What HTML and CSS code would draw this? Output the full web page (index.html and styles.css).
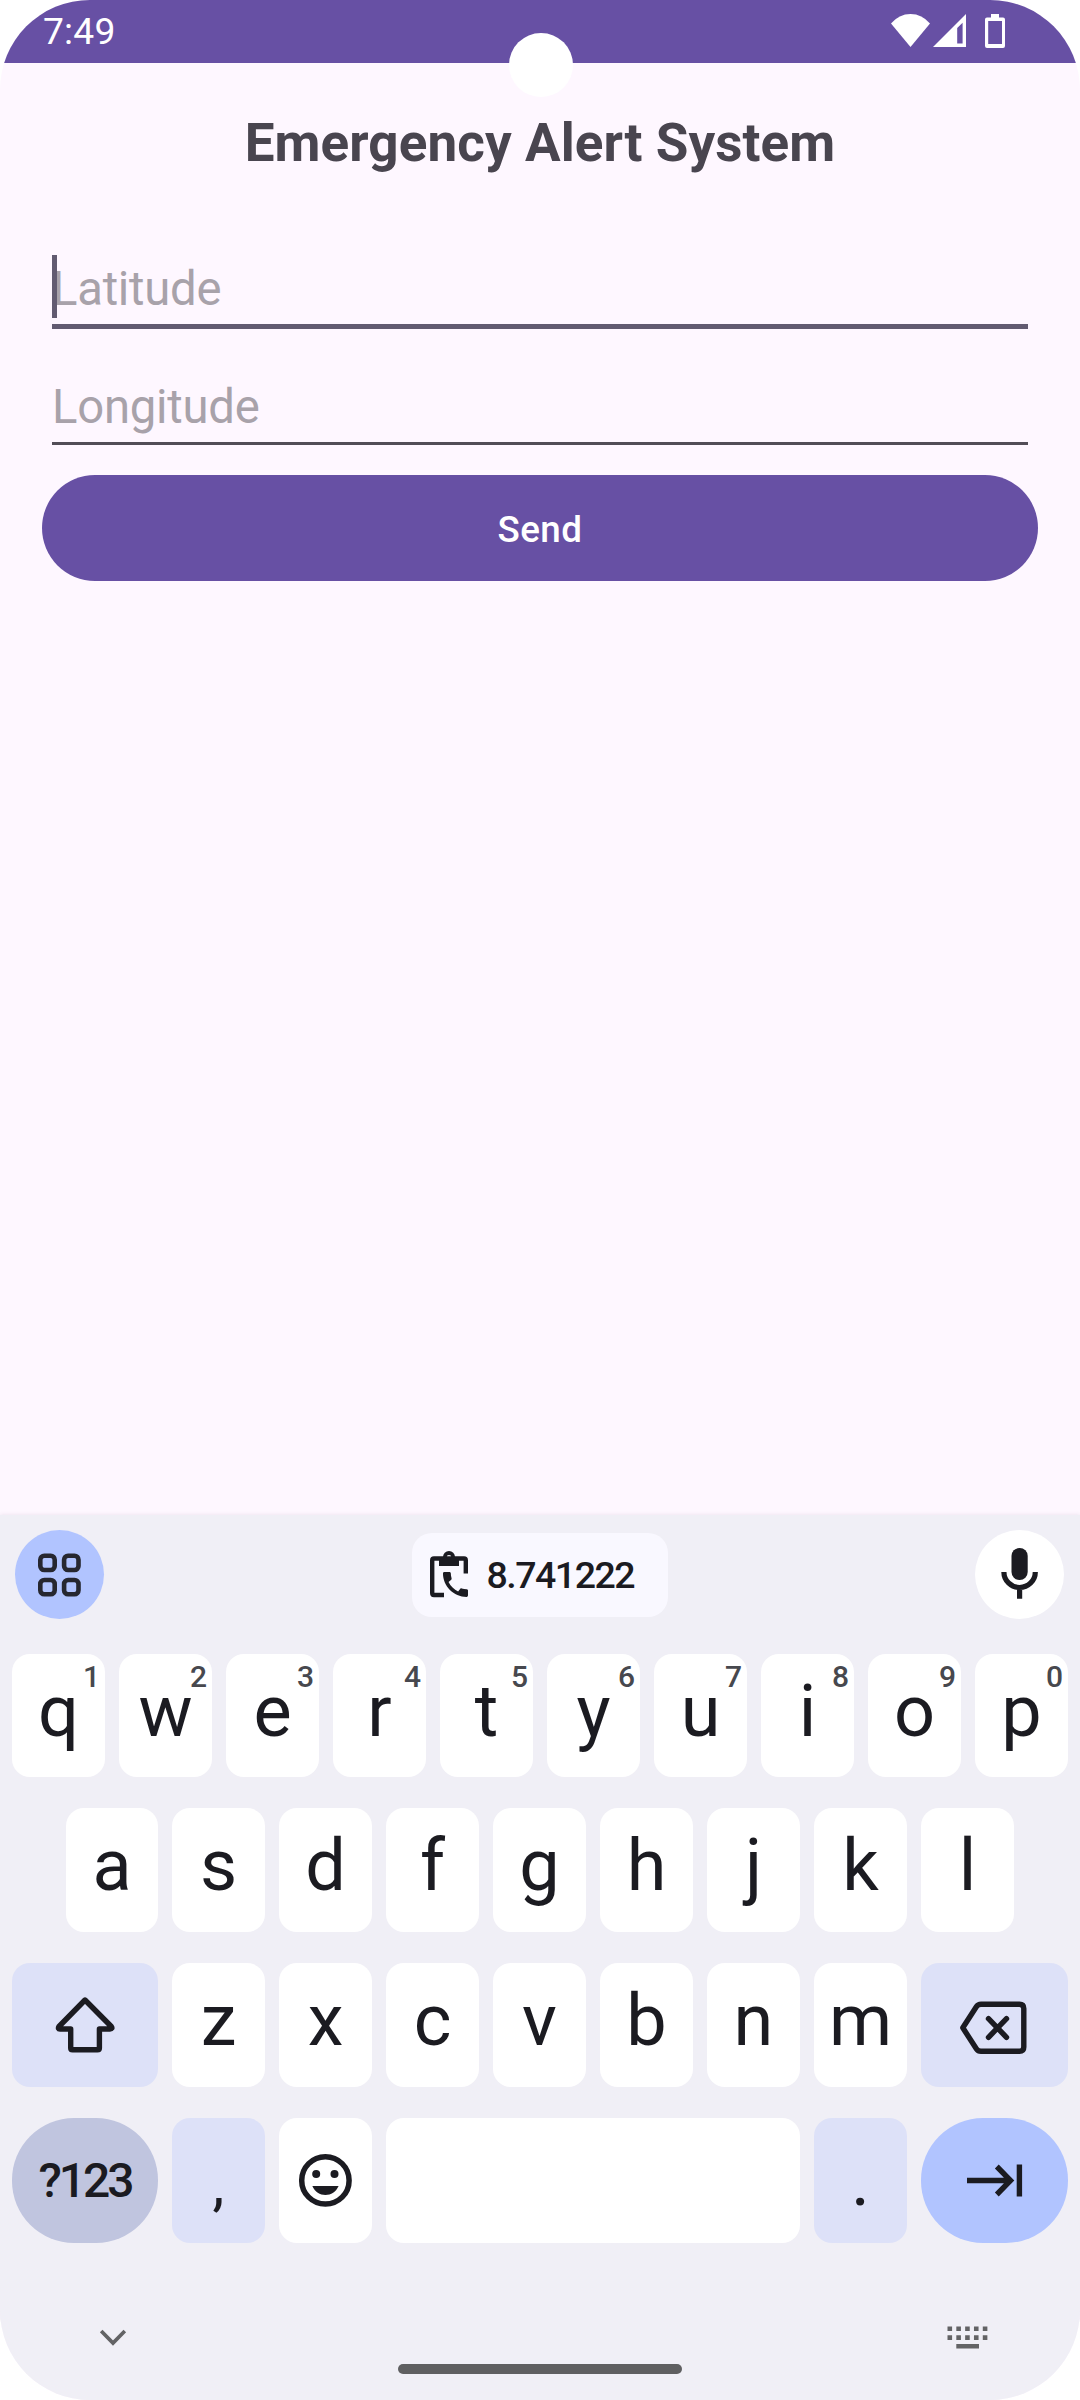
FILE: index.html
```html
<!DOCTYPE html>
<html lang="en">
<head>
<meta charset="utf-8">
<title>Emergency Alert System</title>
<link rel="stylesheet" href="styles.css">
</head>
<body>
<div class="phone">
  <div class="camera"></div>
  <header class="status">
    <span class="time">7:49</span>
    <svg class="status-icons" width="120" height="63" viewBox="888 0 120 63">
      <path fill="#fff" d="M891 23.500Q899 14 910.500 14T930 23.500L910.500 47Z"/>
      <path fill="#fff" fill-rule="evenodd" d="M933 47L966 14V47ZM957.200 28V43.500H962.600V22.700Z"/>
      <path fill="#fff" fill-rule="evenodd" d="M991 14H999V17.500H1003Q1005 17.500 1005 19.500V46Q1005 48 1003 48H987Q985 48 985 46V19.500Q985 17.500 987 17.500H991ZM988.200 21V44H1002V21Z"/>
    </svg>
  </header>

  <main class="app">
    <h1 class="title">Emergency Alert System</h1>
    <div class="field focused"><span class="caret"></span>Latitude</div>
    <div class="field">Longitude</div>
    <button class="send">Send</button>
  </main>

  <section class="keyboard">
    <div class="toolbar">
      <div class="round menu">
        <svg width="44" height="44" viewBox="0.500 0 44 44" fill="none" stroke="#262730" stroke-width="4.600">
          <rect x="2.800" y="2.800" width="14.400" height="14.200" rx="4"/>
          <rect x="26.600" y="2.800" width="14.400" height="14.200" rx="4"/>
          <rect x="2.800" y="27" width="14.400" height="14.200" rx="4"/>
          <rect x="26.600" y="27" width="14.400" height="14.200" rx="4"/>
        </svg>
      </div>
      <div class="chip">
        <svg width="40" height="48" viewBox="429 1551 40 48">
          <path fill="none" stroke="#1b1b21" stroke-width="4.400" stroke-linejoin="round" d="M444 1595H434Q432.200 1595 432.200 1593V1560.500Q432.200 1558.500 434 1558.500H464Q465.800 1558.500 465.800 1560.500V1573.500"/>
          <path fill="#1b1b21" fill-rule="evenodd" d="M439 1557H443A6 6 0 0 1 455 1557H459V1566H439ZM446.600 1557.500A2.400 2.400 0 1 0 451.400 1557.500A2.400 2.400 0 1 0 446.600 1557.500Z"/>
          <path fill="#1b1b21" transform="translate(438.800 1567.800) scale(1.390)" d="M20.010 15.380c-1.230 0-2.420-.2-3.530-.56-.35-.12-.74-.03-1.010.24l-1.570 1.970c-2.830-1.350-5.480-3.900-6.890-6.830l1.950-1.660c.27-.28.35-.67.24-1.020-.37-1.110-.56-2.300-.56-3.530 0-.54-.45-.99-.99-.99H4.190C3.650 3 3 3.240 3 3.990 3 13.280 10.730 21 20.010 21c.71 0 .99-.63.99-1.180v-3.450c0-.54-.45-.99-.99-.99z"/>
        </svg>
        <span>8.741222</span>
      </div>
      <div class="round mic">
        <svg width="89" height="89" viewBox="975 1530 89 89">
          <rect x="1011.500" y="1548" width="16.200" height="32" rx="8" fill="#1b1b21"/>
          <path fill="none" stroke="#1b1b21" stroke-width="5.200" d="M1003.900 1572A15.700 15.500 0 0 0 1035.300 1572M1019.600 1587V1598.700"/>
        </svg>
      </div>
    </div>

    <div class="row row1">
      <div class="key">q<sup>1</sup></div><div class="key">w<sup>2</sup></div><div class="key">e<sup>3</sup></div><div class="key">r<sup>4</sup></div><div class="key">t<sup>5</sup></div><div class="key">y<sup>6</sup></div><div class="key">u<sup>7</sup></div><div class="key">i<sup>8</sup></div><div class="key">o<sup>9</sup></div><div class="key">p<sup>0</sup></div>
    </div>
    <div class="row row2">
      <div class="key">a</div><div class="key">s</div><div class="key">d</div><div class="key">f</div><div class="key">g</div><div class="key">h</div><div class="key">j</div><div class="key">k</div><div class="key">l</div>
    </div>
    <div class="row row3">
      <div class="key wide tint">
        <svg width="146" height="124" viewBox="12 1963 146 124"><path fill="none" stroke="#1b1b21" stroke-width="5.400" stroke-linejoin="round" d="M85 2000L59 2026.500Q57.500 2029 60 2029H70.700V2048Q70.700 2049.800 72.500 2049.800H97.500Q99.400 2049.800 99.400 2048V2029H110Q113 2029 111.300 2026.500Z"/></svg>
      </div>
      <div class="key">z</div><div class="key">x</div><div class="key">c</div><div class="key">v</div><div class="key">b</div><div class="key">n</div><div class="key">m</div>
      <div class="key wide tint">
        <svg width="147" height="124" viewBox="921 1963 147 124"><path fill="none" stroke="#1b1b21" stroke-width="5.400" stroke-linejoin="round" stroke-linecap="round" d="M962.800 2027.800L976.500 2006.500Q978 2004.200 981 2004.200H1019.500Q1023.800 2004.200 1023.800 2008.500V2047Q1023.800 2051.300 1019.500 2051.300H981Q978 2051.300 976.500 2049ZM988.500 2018.700L1006.500 2037.300M1006.500 2018.700L988.500 2037.300"/></svg>
      </div>
    </div>
    <div class="row row4">
      <div class="key wide symbols">?123</div>
      <div class="key tint comma">,</div>
      <div class="key">
        <svg width="93" height="125" viewBox="279 2118 93 125"><circle cx="325.400" cy="2180.400" r="23.700" fill="none" stroke="#1b1b21" stroke-width="5.500"/><circle cx="316.200" cy="2174" r="4" fill="#1b1b21"/><circle cx="334.500" cy="2174" r="4" fill="#1b1b21"/><path fill="#1b1b21" d="M312.300 2186H338.600C336 2192 331 2195 325.400 2195S315 2192 312.300 2186Z"/></svg>
      </div>
      <div class="key space"></div>
      <div class="key tint">.</div>
      <div class="key wide next">
        <svg width="147" height="125" viewBox="921 2118 147 125"><path fill="none" stroke="#1b1b21" stroke-width="5.400" d="M967 2180.500H1009M996.800 2166.500L1010.500 2180.500L996.800 2194.500M1019.400 2164.500V2196.500"/></svg>
      </div>
    </div>

    <footer class="nav">
      <svg class="hide" width="28" height="18" viewBox="99 2329 28 18"><path fill="none" stroke="#636365" stroke-width="3.700" d="M101.200 2331L113 2343L124.800 2331"/></svg>
      <div class="handle"></div>
      <svg class="switch" width="42" height="24" viewBox="947 2326 42 24"><path fill="none" stroke="#636365" stroke-width="4.600" stroke-dasharray="4.600 4.220" d="M947.500 2328.800H988.500M947.500 2337.600H988.500"/><path fill="#636365" d="M956.300 2344H979V2348.600H956.300Z"/></svg>
    </footer>
  </section>
</div>
</body>
</html>
```

FILE: styles.css
```css
* { box-sizing: border-box; }
body {
  margin: 0;
  background: #fff;
  font-family: Roboto, sans-serif;
}
svg { display: block; flex: none; }
.phone {
  position: relative;
  display: flex;
  flex-direction: column;
  width: 1080px;
  height: 2400px;
  overflow: hidden;
  border-radius: 90px;
  background: #fef7ff;
}
.camera {
  position: absolute;
  left: 509px;
  top: 33px;
  width: 64px;
  height: 64px;
  border-radius: 50%;
  background: #fff;
}
.status {
  display: flex;
  justify-content: space-between;
  height: 63px;
  padding: 0 72px 0 43px;
  background: #6750a4;
  color: #fff;
}
.time { font-size: 37.2px; line-height: 63px; letter-spacing: 0.2px; }

.app {
  display: flex;
  flex-direction: column;
  flex: 1;
  padding: 49px 42px 0;
}
.title {
  margin: 0 0 79px;
  font-size: 53px;
  line-height: 62px;
  font-weight: 700;
  letter-spacing: 0.1px;
  text-align: center;
  color: #49454f;
}
.field {
  position: relative;
  margin: 0 10px 30px;
  padding-top: 1px;
  border-bottom: 3px solid #524d57;
  font-size: 47.25px;
  line-height: 69px;
  letter-spacing: -0.25px;
  color: #a8a2aa;
}
.focused {
  margin-bottom: 43px;
  padding-top: 2px;
  border-bottom: 5px solid #625b71;
}
.caret {
  position: absolute;
  left: 0;
  top: 2px;
  width: 5px;
  height: 63px;
  background: #625b71;
}
.send {
  height: 106px;
  padding: 2px 0 0;
  border: 0;
  border-radius: 53px;
  background: #6750a4;
  color: #fff;
  font: 500 36.75px Roboto, sans-serif;
  letter-spacing: 0.5px;
}

.keyboard {
  display: flex;
  flex-direction: column;
  height: 885px;
  background: #f0eff6;
  box-shadow: 0 0 4px rgba(80, 60, 90, 0.12);
  color: #1b1b21;
}
.toolbar {
  display: flex;
  justify-content: space-between;
  align-items: center;
  height: 89px;
  margin: 15px 16px 35px 15px;
}
.round {
  display: flex;
  align-items: center;
  justify-content: center;
  width: 89px;
  height: 89px;
  border-radius: 50%;
}
.menu { background: #b1c4ff; }
.mic { background: #fff; }
.chip {
  display: flex;
  align-items: center;
  gap: 18px;
  width: 256px;
  height: 84px;
  padding-left: 17px;
  border-radius: 20px;
  background: #f9f8ff;
  font-size: 37.5px;
  font-weight: 500;
  letter-spacing: -1.5px;
}
.row {
  display: flex;
  gap: 14px;
  height: 124px;
  margin: 0 12px 31px;
}
.row1 { height: 123px; }
.row2 { margin-left: 66px; margin-right: 66px; }
.row4 { height: 125px; margin-bottom: 0; }
.key {
  position: relative;
  display: flex;
  align-items: center;
  justify-content: center;
  flex: none;
  width: 93px;
  height: 100%;
  padding-bottom: 8px;
  border-radius: 18px;
  background: #fff;
  font-size: 72px;
  line-height: 84px;
}
.key svg { margin-bottom: -8px; }
.row2 .key:first-child { width: 92px; }
.key sup {
  position: absolute;
  right: 5px;
  top: 5px;
  font-size: 30px;
  line-height: 36px;
  font-weight: 500;
  color: #47484e;
}
.wide { width: 146px; }
.wide:last-child { width: 147px; }
.tint { background: #dde1f8; }
.row4 .key { padding-bottom: 0; }
.row4 .key svg { margin-bottom: 0; }
.row4 .comma { padding-top: 6px; font-size: 60px; }
.space { width: 414px; }
.row4 .symbols {
  border-radius: 62px;
  background: #c0c5df;
  font-size: 48px;
  font-weight: 500;
  letter-spacing: -3px;
}
.next { border-radius: 62px; background: #b1c4ff; }

.nav {
  display: flex;
  justify-content: space-between;
  align-items: flex-start;
  padding: 83px 91px 0 99px;
}
.hide { margin-top: 3px; }
.handle {
  width: 284px;
  height: 10px;
  margin: 38px 0 0 5px;
  border-radius: 5px;
  background: #5f5f61;
}
```
